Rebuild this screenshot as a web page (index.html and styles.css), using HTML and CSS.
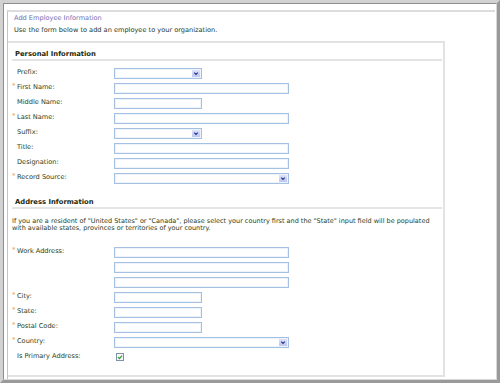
FILE: index.html
```html
<!DOCTYPE html>
<html lang="en">
<head>
<meta charset="utf-8">
<title>Add Employee Information</title>
<link rel="stylesheet" href="styles.css">
</head>
<body>
<div class="window">
  <div class="frame">
    <div class="panel">
      <div class="page-head">
        <div class="page-title">Add Employee Information</div>
        <div class="page-desc">Use the form below to add an employee to your organization.</div>
      </div>
      <div class="form-box">
        <h2 class="section-title">Personal Information</h2>
        <div class="rows">
          <div class="row"><span class="req"></span><span class="lbl">Prefix:</span><div class="select short"><span class="arrow"><svg viewBox="0 0 8 7" width="8" height="7"><path d="M2.2 2.6 L4 4.4 L5.8 2.6" fill="none" stroke="#26368e" stroke-width="1.2"/></svg></span></div></div>
          <div class="row"><span class="req">*</span><span class="lbl">First Name:</span><input class="field" type="text"></div>
          <div class="row"><span class="req"></span><span class="lbl">Middle Name:</span><input class="field short" type="text"></div>
          <div class="row"><span class="req">*</span><span class="lbl">Last Name:</span><input class="field" type="text"></div>
          <div class="row"><span class="req"></span><span class="lbl">Suffix:</span><div class="select short"><span class="arrow"><svg viewBox="0 0 8 7" width="8" height="7"><path d="M2.2 2.6 L4 4.4 L5.8 2.6" fill="none" stroke="#26368e" stroke-width="1.2"/></svg></span></div></div>
          <div class="row"><span class="req"></span><span class="lbl">Title:</span><input class="field" type="text"></div>
          <div class="row"><span class="req"></span><span class="lbl">Designation:</span><input class="field" type="text"></div>
          <div class="row"><span class="req">*</span><span class="lbl">Record Source:</span><div class="select"><span class="arrow"><svg viewBox="0 0 8 7" width="8" height="7"><path d="M2.2 2.6 L4 4.4 L5.8 2.6" fill="none" stroke="#26368e" stroke-width="1.2"/></svg></span></div></div>
        </div>
        <h2 class="section-title addr">Address Information</h2>
        <p class="note">If you are a resident of "United States" or "Canada", please select your country first and the "State" input field will be populated<br>with available states, provinces or territories of your country.</p>
        <div class="rows addr-rows">
          <div class="row"><span class="req">*</span><span class="lbl">Work Address:</span><input class="field" type="text"></div>
          <div class="row"><span class="req"></span><span class="lbl"></span><input class="field" type="text"></div>
          <div class="row"><span class="req"></span><span class="lbl"></span><input class="field" type="text"></div>
          <div class="row"><span class="req">*</span><span class="lbl">City:</span><input class="field short" type="text"></div>
          <div class="row"><span class="req">*</span><span class="lbl">State:</span><input class="field short" type="text"></div>
          <div class="row"><span class="req">*</span><span class="lbl">Postal Code:</span><input class="field short" type="text"></div>
          <div class="row"><span class="req">*</span><span class="lbl">Country:</span><div class="select"><span class="arrow"><svg viewBox="0 0 8 7" width="8" height="7"><path d="M2.2 2.6 L4 4.4 L5.8 2.6" fill="none" stroke="#26368e" stroke-width="1.2"/></svg></span></div></div>
          <div class="row"><span class="req"></span><span class="lbl">Is Primary Address:</span><span class="check"><svg viewBox="0 0 8 8" width="8" height="8"><rect x="0.5" y="0.5" width="7" height="7" fill="#f4f6f8" stroke="#7f93a8"/><path d="M2 4.2 L3.4 5.6 L6 2.6" fill="none" stroke="#2f9a2f" stroke-width="1.2"/></svg></span></div>
        </div>
      </div>
    </div>
  </div>
</div>
</body>
</html>
```
FILE: styles.css
```css
* { box-sizing: border-box; }
html, body { margin: 0; padding: 0; background: #fff; }
body { font-family: "DejaVu Sans", Verdana, sans-serif; color: #2a4020; }

.window {
  width: 500px;
  height: 383px;
  border: 3px solid;
  border-color: #d2d2d2 #9a9a9a #9a9a9a #d2d2d2;
}
.frame {
  height: 100%;
  border: 1px solid;
  border-color: #8e8e8e #d8d8d8 #d8d8d8 #8e8e8e;
  padding: 6px 1px 0 3px;
  background: #fff;
}
.panel {
  height: 100%;
  border-top: 2px solid #dcdcdc;
  border-left: 1px solid #c4c4c4;
}

.page-head { height: 29px; padding: 1px 0 0 6px; font-size: 6.6px; line-height: 11.5px; }
.page-title { color: #6e6eb4; }
.page-desc { color: #263626; }

.form-box {
  width: 437px;
  height: 336px;
  border: 2px solid #e2e2e2;
  border-left: 0;
}

.section-title {
  margin: 0 1px 0 4px;
  padding: 6px 0 0 3px;
  height: 18px;
  line-height: 10px;
  font-size: 6.8px;
  font-weight: bold;
  color: #1c2a10;
  border-bottom: 2px solid #e4e4e4;
}
.section-title.addr { margin-top: 7px; }

.rows { display: flex; flex-direction: column; gap: 4px; margin-top: 7px; }
.rows.addr-rows { margin-top: 15px; }
.row { display: flex; align-items: flex-start; height: 11px; padding-left: 4px; }
.req { width: 5px; flex: none; color: #f0a040; font-size: 7px; line-height: 6px; }
.lbl { width: 97px; flex: none; font-size: 6.6px; line-height: 8px; }

.field, .select {
  width: 175px;
  height: 11px;
  margin: 0;
  padding: 0;
  border: 1px solid #a4c0e2;
  background: #fff;
  box-shadow: inset 0 0 0 1px #eef3fa;
  font: inherit;
}
.field.short, .select.short { width: 88px; }
.select { display: flex; justify-content: flex-end; padding: 1px 1px 0 0; }
.arrow {
  display: block;
  width: 8px;
  height: 7px;
  background: linear-gradient(#dde3fb, #bcc6f0);
}
.arrow svg { display: block; }

.note {
  margin: 9px 0 0 4px;
  font-size: 6.5px;
  line-height: 6.8px;
}
.check { display: block; margin: 1px 0 0 2px; width: 8px; height: 8px; }
.check svg { display: block; }
```
